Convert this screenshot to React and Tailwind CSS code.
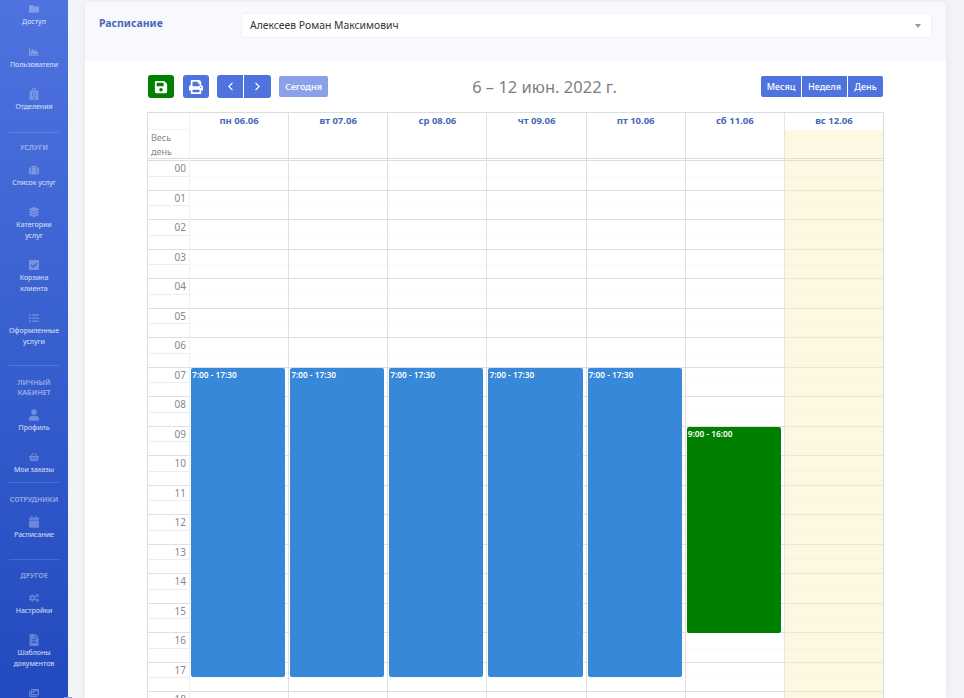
import React from 'react';
import {
    FaFolder, FaChartArea, FaHospital, FaSuitcase, FaLayerGroup, FaCheckSquare, FaListUl, FaUser,
    FaShoppingBasket, FaCalendar, FaCogs, FaFileAlt, FaImages, FaSave, FaPrint,
} from 'react-icons/fa';
import { ChevronLeft, ChevronRight } from 'lucide-react';

const FONT = "font-['Noto_Sans',sans-serif]";

const NAV = [
    { icon: FaFolder, label: ['Доступ'] },
    { icon: FaChartArea, label: ['Пользователи'] },
    { icon: FaHospital, label: ['Отделения'], last: 'pb-[13px]' },
    { divider: true },
    { heading: ['Услуги'], top: 'pt-[10px]' },
    { icon: FaSuitcase, label: ['Список услуг'] },
    { icon: FaLayerGroup, label: ['Категории', 'услуг'] },
    { icon: FaCheckSquare, label: ['Корзина', 'клиента'] },
    { icon: FaListUl, label: ['Оформленные', 'услуги'] },
    { divider: true },
    { heading: ['Личный', 'кабинет'], top: 'pt-[12px]' },
    { icon: FaUser, label: ['Профиль'], last: 'pb-[11px]' },
    { icon: FaShoppingBasket, label: ['Мои заказы'], last: 'pb-[1px]' },
    { divider: true },
    { heading: ['Сотрудники'], top: 'pt-[12px]' },
    { icon: FaCalendar, label: ['Расписание'] },
    { divider: true },
    { heading: ['Другое'], top: 'pt-[11px]' },
    { icon: FaCogs, label: ['Настройки'], last: 'pb-[12px]' },
    { icon: FaFileAlt, label: ['Шаблоны', 'документов'] },
    { icon: FaImages, label: [] },
];

const DAYS = ['пн 06.06', 'вт 07.06', 'ср 08.06', 'чт 09.06', 'пт 10.06', 'сб 11.06', 'вс 12.06'];
const HOURS = ['00', '01', '02', '03', '04', '05', '06', '07', '08', '09', '10', '11', '12', '13', '14', '15', '16', '17', '18'];

// one event per day column, offsets are hours * 29.5px
const EVENTS = [
    { time: '7:00 - 17:30', cls: 'top-[206.5px] h-[309.5px] bg-[#3788d8]' },
    { time: '7:00 - 17:30', cls: 'top-[206.5px] h-[309.5px] bg-[#3788d8]' },
    { time: '7:00 - 17:30', cls: 'top-[206.5px] h-[309.5px] bg-[#3788d8]' },
    { time: '7:00 - 17:30', cls: 'top-[206.5px] h-[309.5px] bg-[#3788d8]' },
    { time: '7:00 - 17:30', cls: 'top-[206.5px] h-[309.5px] bg-[#3788d8]' },
    { time: '9:00 - 16:00', cls: 'top-[265.5px] h-[206.5px] bg-[#008000]' },
    null,
];

const Sidebar = () => (
    <aside className="w-[68px] shrink-0 h-full overflow-hidden bg-gradient-to-b from-[#4e73df] to-[#224abe]">
        <div className="-mt-[3px] flex flex-col">
            {NAV.map((item, i) => {
                if (item.divider) return <div key={i} className="mx-[9px] mt-[6px] h-px bg-white/15" />;
                if (item.heading) {
                    return (
                        <div key={i} className={`${item.top} pb-[5px] text-center text-[7px] leading-[10px] font-bold uppercase text-white/45`}>
                            {item.heading.map(h => <div key={h}>{h}</div>)}
                        </div>
                    );
                }
                const Icon = item.icon;
                return (
                    <div key={i} className={`flex flex-col items-center pt-[6px] ${item.last || 'pb-[12px]'}`}>
                        <Icon size={10} className="h-[12px] text-white/30" />
                        <div className="mt-[2px] text-center text-[7px] leading-[10.5px] text-white/80 whitespace-nowrap">
                            {item.label.map(l => <div key={l}>{l}</div>)}
                        </div>
                    </div>
                );
            })}
        </div>
    </aside>
);

const Toolbar = () => (
    <div className="flex items-center justify-between h-[23px] pl-px pr-px">
        <div className="flex items-center">
            <button className="w-[26px] h-[23px] flex items-center justify-center rounded-[3px] bg-[#008000] text-white"><FaSave size={14} /></button>
            <button className="ml-[9px] w-[26px] h-[23px] flex items-center justify-center rounded-[3px] bg-[#4e73df] text-white"><FaPrint size={14} /></button>
            <div className="ml-[8px] flex gap-px">
                <button className="w-[26px] h-[23px] flex items-center justify-center rounded-l-[3px] bg-[#4e73df] text-white"><ChevronLeft size={13} /></button>
                <button className="w-[27px] h-[23px] flex items-center justify-center rounded-r-[3px] bg-[#4e73df] text-white"><ChevronRight size={13} /></button>
            </div>
            <button className="ml-[8px] w-[49px] h-[21px] rounded-[2px] bg-[#8aa0e8] text-white/90 text-[9px] font-semibold">Сегодня</button>
        </div>
        <div className="text-[16.5px] leading-[23px] text-[#808080] whitespace-nowrap">6 – 12 июн. 2022 г.</div>
        <div className="flex gap-px text-[9px] font-medium text-white">
            <button className="w-[40px] h-[21px] rounded-l-[2px] bg-[#4e73df]">Месяц</button>
            <button className="w-[45px] h-[21px] bg-[#4e73df]">Неделя</button>
            <button className="w-[35px] h-[21px] rounded-r-[2px] bg-[#4e73df]">День</button>
        </div>
    </div>
);

const Calendar = () => (
    <div className="mt-[14px] w-[737px] h-[586px] overflow-hidden border-l border-r border-t border-[#ddd]">
        <div className="flex h-full">
            {/* time axis */}
            <div className="w-[41px] shrink-0">
                <div className="h-[17px] border-b border-[#f2f2f2]" />
                <div className="h-[31px] pl-[3px] pt-[1px] text-[9px] leading-[14px] text-[#888] border-b-[3px] border-double border-[#ddd]">Весь<br />день</div>
                {HOURS.map(h => (
                    <div key={h} className="h-[29.5px] border-b border-[#e0e0e0] relative">
                        <div className="pr-[3px] text-right text-[10px] leading-[14px] text-[#888]">{h}</div>
                        <div className="absolute left-0 right-0 top-[14.5px] border-t border-[#eee]" />
                    </div>
                ))}
            </div>
            {/* day columns */}
            {DAYS.map((d, i) => (
                <div key={d} className={`flex-1 min-w-0 border-l ${i === 0 ? 'border-[#f0f0f0]' : i === 6 ? 'border-[#e8e6da]' : 'border-[#e0e0e0]'}`}>
                    <div className="h-[17px] flex items-center justify-center text-[9.5px] font-bold text-[#4668b8] whitespace-nowrap">{d}</div>
                    <div className={`h-[31px] border-b-[3px] border-double border-[#ddd] ${i === 6 ? 'bg-[#fdf8e1]' : ''}`} />
                    <div className={`relative ${i === 6 ? 'bg-[#fdf8e1]' : ''}`}>
                        {HOURS.map(h => (
                            <div key={h} className={`relative h-[29.5px] border-b ${i === 6 ? 'border-[#ebe7d3]' : 'border-[#e0e0e0]'}`}>
                                <div className={`absolute left-0 right-0 top-[14.5px] border-t ${i === 6 ? 'border-[#f8f3dc]' : 'border-[#fafafa]'}`} />
                            </div>
                        ))}
                        {EVENTS[i] && (
                            <div className={`absolute left-[1px] right-[3px] rounded-[2px] px-[1px] py-[1px] text-[8.3px] leading-[12px] font-semibold text-white ${EVENTS[i].cls}`}>
                                {EVENTS[i].time}
                            </div>
                        )}
                    </div>
                </div>
            ))}
        </div>
    </div>
);

const App = () => (
    <div className={`relative h-screen flex overflow-hidden bg-[#f3f4f8] ${FONT}`}>
        <Sidebar />
        <main className="flex-1 min-w-0 pl-[17px] pr-[18px] pt-[2px]">
            <div className="h-full rounded-t-[4px] bg-white shadow-[0_0_8px_rgba(58,59,69,0.08)] overflow-hidden">
                <div className="h-[59px] flex items-start bg-[#f8f9fc] pl-[14px] pr-[14px] pt-[11px]">
                    <h6 className="w-[142px] shrink-0 text-[10.5px] leading-[20px] font-bold text-[#4668b8]">Расписание</h6>
                    <div className="flex-1 h-[25px] flex items-center justify-between rounded-[3px] border border-[#f1f2f6] bg-white pl-[8px] pr-[10px]">
                        <span className="text-[10.4px] text-[#333]">Алексеев Роман Максимович</span>
                        <span className="w-0 h-0 border-l-[3px] border-r-[3px] border-t-[4px] border-l-transparent border-r-transparent border-t-[#999]" />
                    </div>
                </div>
                <div className="pl-[62px] pr-[62px] pt-[14px]">
                    <Toolbar />
                    <Calendar />
                </div>
            </div>
        </main>
        {/* sliver of the scrollbar thumb at the page's bottom edge */}
        <div className="absolute left-[64px] bottom-0 w-[8px] h-px bg-[#7f97e6]" />
    </div>
);

export default App;
